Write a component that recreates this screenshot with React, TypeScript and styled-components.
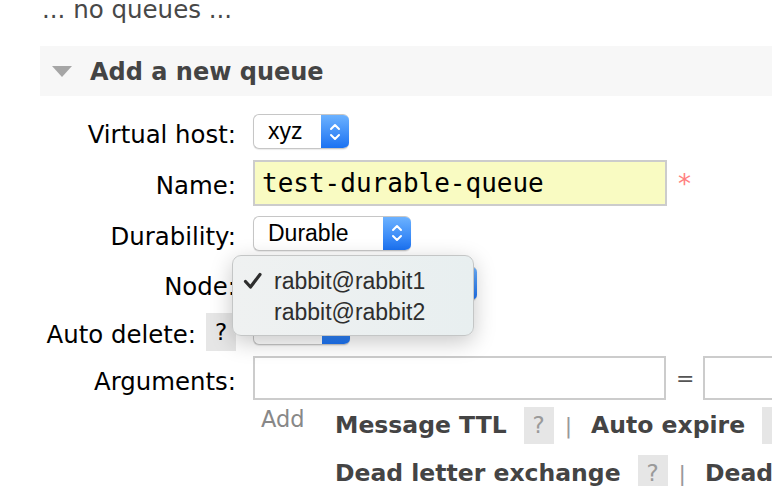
import React from "react";
import styled, { createGlobalStyle } from "styled-components";

const Global = createGlobalStyle`
  html, body { margin: 0; padding: 0; background: #fff; }
  body { overflow: hidden; }
`;

const Page = styled.div`
  width: 772px;
  height: 486px;
  overflow: hidden;
  position: relative;
  font-family: "DejaVu Sans", Verdana, sans-serif;
`;

const NoQueues = styled.p`
  margin: 0 0 0 42px;
  font-size: 24.5px;
  line-height: 20px;
  color: #484848;
  white-space: nowrap;
`;

const Section = styled.section`
  margin: 26px 0 0 40px;
`;

const Header = styled.div`
  height: 50px;
  background: #f7f7f7;
  display: flex;
  align-items: center;
  padding-left: 12px;
  gap: 18px;
`;

const Triangle = styled.span`
  width: 0;
  height: 0;
  border-left: 10.5px solid transparent;
  border-right: 10.5px solid transparent;
  border-top: 11px solid #a6a6a6;
`;

const Title = styled.h2`
  margin: 2px 0 0;
  font-size: 24px;
  font-weight: bold;
  color: #444;
  white-space: nowrap;
`;

const Form = styled.div`
  padding-top: 10px;
`;

const Row = styled.div<{ $h: number }>`
  display: grid;
  grid-template-columns: 196px auto;
  column-gap: 17px;
  align-items: center;
  height: ${(p) => p.$h}px;
`;

const Label = styled.div`
  display: flex;
  justify-content: flex-end;
  align-items: center;
  gap: 10px;
  font-size: 24.4px;
  color: #000;
  white-space: nowrap;
`;

const LabelText = styled.span`
  padding-top: 6px;
`;

const Cell = styled.div<{ $lift?: number }>`
  display: flex;
  align-items: center;
  white-space: nowrap;
  padding-bottom: ${(p) => (p.$lift || 0) * 2}px;
`;

const SelectBox = styled.div<{ $w: number }>`
  width: ${(p) => p.$w}px;
  height: 35px;
  box-sizing: border-box;
  display: flex;
  border: 1px solid #c6c6c6;
  border-right: none;
  border-radius: 6px;
  background: #fff;
  overflow: hidden;
  box-shadow: 0 1px 1px rgba(0, 0, 0, 0.08);
  font-family: "Liberation Sans", Arial, sans-serif;
  font-size: 23px;
  color: #000;
`;

const SelectValue = styled.span`
  flex: 1;
  padding-left: 14px;
  display: flex;
  align-items: center;
`;

const Stepper = styled.span`
  width: 28px;
  background: linear-gradient(#6cb2ff, #1b72f2);
  display: flex;
  align-items: center;
  justify-content: center;
`;

const TextInput = styled.input<{ $w: number; $h: number; $bg?: string }>`
  width: ${(p) => p.$w}px;
  height: ${(p) => p.$h}px;
  box-sizing: border-box;
  border: 2px solid #cccccc;
  background: ${(p) => p.$bg || "#fff"};
  padding: 0 0 0 7px;
  margin: 0;
  outline: none;
  font-family: "DejaVu Sans Mono", Menlo, monospace;
  font-size: 26px;
  color: #000;
`;

const Required = styled.span`
  margin-left: 11px;
  color: #ff8080;
  font-size: 26px;
  line-height: 1;
  padding-top: 2px;
`;

const Equals = styled.span`
  margin: 0 9px 0 10px;
  color: #555;
  font-size: 22px;
`;

const HelpBox = styled.span<{ $dark?: boolean; $h: number }>`
  display: inline-flex;
  align-items: center;
  justify-content: center;
  width: 30px;
  height: ${(p) => p.$h}px;
  background: #e6e6e6;
  color: ${(p) => (p.$dark ? "#000" : "#9a9a9a")};
  font-weight: normal;
  font-size: 23px;
`;

const Extras = styled.div`
  display: grid;
  grid-template-columns: 196px auto;
  column-gap: 17px;
`;

const ExtrasCell = styled.div`
  display: flex;
  align-items: flex-start;
  white-space: nowrap;
`;

const AddLink = styled.span`
  width: 82px;
  box-sizing: border-box;
  padding: 5px 0 0 8px;
  font-size: 22.5px;
  color: #888;
`;

const Lines = styled.div`
  display: flex;
  flex-direction: column;
`;

const Line = styled.div`
  height: 48px;
  display: flex;
  align-items: center;
  font-size: 23.5px;
  font-weight: bold;
  color: #444;
`;

const Gap = styled.span`
  width: 17px;
`;

const Sep = styled.span`
  margin: 0 19px 0 11px;
  color: #999;
  font-weight: normal;
  font-size: 22px;
`;

const NodeWrap = styled.div`
  position: relative;
`;

const Menu = styled.div`
  position: absolute;
  left: -21px;
  top: -11px;
  width: 242px;
  height: 81px;
  box-sizing: border-box;
  padding: 10px 0 0;
  border: 1px solid #c4c6c6;
  border-radius: 9px;
  background: linear-gradient(90deg, #eff1f1, #e8eff0);
  box-shadow: 0 6px 22px rgba(0, 0, 0, 0.22);
  font-family: "Liberation Sans", Arial, sans-serif;
  font-size: 23px;
  color: #2e2e2e;
  z-index: 2;
`;

const MenuItem = styled.div`
  height: 31px;
  display: grid;
  grid-template-columns: 41px auto;
  align-items: center;
`;

const CheckCell = styled.span`
  display: flex;
  padding-left: 10px;
`;

const Chevrons = () => (
  <svg width="12" height="20" viewBox="0 0 12 20">
    <polyline points="2,7 6,3 10,7" fill="none" stroke="#fff" strokeWidth="2" strokeLinecap="round" strokeLinejoin="round" />
    <polyline points="2,13 6,17 10,13" fill="none" stroke="#fff" strokeWidth="2" strokeLinecap="round" strokeLinejoin="round" />
  </svg>
);

const Select = ({ w, value }: { w: number; value: string }) => (
  <SelectBox $w={w}>
    <SelectValue>{value}</SelectValue>
    <Stepper>
      <Chevrons />
    </Stepper>
  </SelectBox>
);

const Check = () => (
  <svg width="20" height="18" viewBox="0 0 20 18">
    <polyline points="2.5,9.5 7.5,15 17,2.5" fill="none" stroke="#2e2e2e" strokeWidth="3.2" strokeLinecap="round" strokeLinejoin="round" />
  </svg>
);

export default function App() {
  return (
    <Page>
      <Global />
      <NoQueues>... no queues ...</NoQueues>
      <Section>
        <Header>
          <Triangle />
          <Title>Add a new queue</Title>
        </Header>
        <Form>
          <Row $h={51}>
            <Label>
              <LabelText>Virtual host:</LabelText>
            </Label>
            <Cell>
              <Select w={96} value="xyz" />
            </Cell>
          </Row>
          <Row $h={51}>
            <Label>
              <LabelText>Name:</LabelText>
            </Label>
            <Cell>
              <TextInput $w={414} $h={46} $bg="#f9fbc2" readOnly value="test-durable-queue" />
              <Required>*</Required>
            </Cell>
          </Row>
          <Row $h={50}>
            <Label>
              <LabelText>Durability:</LabelText>
            </Label>
            <Cell>
              <Select w={158} value="Durable" />
            </Cell>
          </Row>
          <Row $h={50}>
            <Label>
              <LabelText>Node:</LabelText>
            </Label>
            <Cell>
              <NodeWrap>
                <Select w={224} value="rabbit@rabbit1" />
                <Menu>
                  <MenuItem>
                    <CheckCell>
                      <Check />
                    </CheckCell>
                    <span>rabbit@rabbit1</span>
                  </MenuItem>
                  <MenuItem>
                    <span />
                    <span>rabbit@rabbit2</span>
                  </MenuItem>
                </Menu>
              </NodeWrap>
            </Cell>
          </Row>
          <Row $h={47}>
            <Label>
              <LabelText>Auto delete:</LabelText>
              <HelpBox $dark $h={38}>?</HelpBox>
            </Label>
            <Cell $lift={4}>
              <Select w={97} value="No" />
            </Cell>
          </Row>
          <Row $h={46}>
            <Label>
              <LabelText>Arguments:</LabelText>
            </Label>
            <Cell>
              <TextInput $w={413} $h={44} readOnly value="" />
              <Equals>=</Equals>
              <TextInput $w={200} $h={44} readOnly value="" />
            </Cell>
          </Row>
          <Extras>
            <span />
            <ExtrasCell>
              <AddLink>Add</AddLink>
              <Lines>
                <Line>
                  Message TTL
                  <Gap />
                  <HelpBox $h={37}>?</HelpBox>
                  <Sep>|</Sep>
                  Auto expire
                  <Gap />
                  <HelpBox $h={37}>?</HelpBox>
                </Line>
                <Line>
                  Dead letter exchange
                  <Gap />
                  <HelpBox $h={37}>?</HelpBox>
                  <Sep>|</Sep>
                  Dead letter routing key
                </Line>
              </Lines>
            </ExtrasCell>
          </Extras>
        </Form>
      </Section>
    </Page>
  );
}
